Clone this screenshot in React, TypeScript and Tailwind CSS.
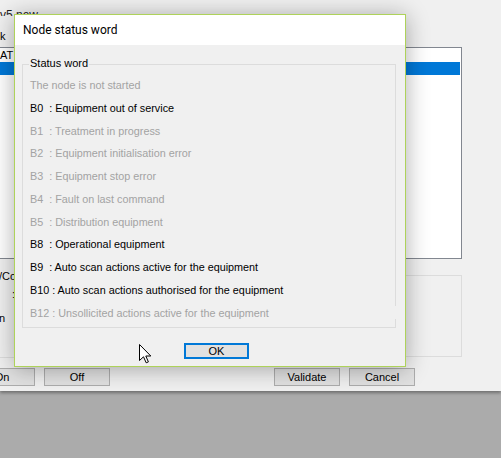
const rows = [
  { text: "The node is not started", on: false },
  { text: "B0  : Equipment out of service", on: true },
  { text: "B1  : Treatment in progress", on: false },
  { text: "B2  : Equipment initialisation error", on: false },
  { text: "B3  : Equipment stop error", on: false },
  { text: "B4  : Fault on last command", on: false },
  { text: "B5  : Distribution equipment", on: false },
  { text: "B8  : Operational equipment", on: true },
  { text: "B9  : Auto scan actions active for the equipment", on: true },
  { text: "B10 : Auto scan actions authorised for the equipment", on: true },
  { text: "B12 : Unsollicited actions active for the equipment", on: false },
];

const WinButton = ({ label, className }: { label: string; className?: string }) => (
  <div
    className={`h-[18px] w-[66px] shrink-0 border border-[#adadad] bg-[#e1e1e1] flex items-center justify-center text-[11px] text-black ${className ?? ""}`}
  >
    {label}
  </div>
);

const Cursor = () => (
  <svg width="13" height="20" viewBox="0 0 13 20" className="absolute left-[124px] top-[329px]">
    <path
      d="M0.5 0.5 L0.5 16.5 L4.5 12.8 L7.2 18.8 L9.4 17.9 L6.8 12 L11.8 12 Z"
      fill="#ffffff"
      stroke="#000000"
      strokeWidth="1"
      strokeLinejoin="miter"
    />
  </svg>
);

const App = () => {
  return (
    <div
      className="relative w-[501px] h-[458px] overflow-hidden bg-[#ababab]"
      style={{ fontFamily: '"Liberation Sans", Arial, sans-serif' }}
    >
      {/* window behind the dialog */}
      <div className="h-[391px] bg-[#f0f0f0] flex flex-col text-[11px] leading-[13px] text-black shadow-[0_2px_3px_rgba(0,0,0,0.35)]">
        <div className="h-[16px] overflow-hidden pt-[9px] text-[12px] text-[#1e1e1e]">v5.new</div>
        <div className="h-[31px] pt-[14px]">k</div>

        <div className="-ml-[2px] w-[464px] h-[212px] border border-[#828790] bg-white flex flex-col">
          <div className="h-[14px] leading-[14px] pl-[1px]">AT</div>
          <div className="h-[13px] mr-[1px] bg-[#0078d7]" />
        </div>

        <div className="h-[109px] flex">
          <div className="w-[275px] flex flex-col">
            <div className="mt-[11px] -ml-[1px]">/Co</div>
            <div className="mt-[5px] pl-[12px]">:</div>
            <div className="mt-[11px] -ml-[1px]">n</div>
            <div className="mt-[32px] h-[1px] w-[14px] bg-[#dcdcdc]" />
          </div>
          <div className="mt-[16px] w-[187px] h-[82px] border border-[#dcdcdc]" />
        </div>

        <div className="flex">
          <WinButton label="On" className="-ml-[31px]" />
          <WinButton label="Off" className="ml-[9px]" />
          <WinButton label="Validate" className="ml-[164px]" />
          <WinButton label="Cancel" className="ml-[9px]" />
        </div>
      </div>

      {/* Node status word dialog */}
      <div className="absolute left-[14px] top-[14px] w-[392px] h-[353px] border border-[#aed25a] bg-[#f0f0f0] shadow-[0_2px_22px_rgba(0,0,0,0.32)] flex flex-col">
        <div
          className="h-[30px] bg-white flex items-center pl-[8px] text-[12px] text-black"
          style={{ fontFamily: 'Roboto, "Noto Sans", sans-serif' }}
        >
          Node status word
        </div>

        <div className="flex flex-col pl-[7px] pt-[19px]">
          <div className="relative w-[374px] h-[264px] border border-[#dcdcdc]">
            <span className="absolute left-[6px] -top-[8px] px-[1px] bg-[#f0f0f0] text-[11px] leading-[13px] text-black">
              Status word
            </span>
            <div className="flex flex-col pl-[7px] pt-[9px]">
              {rows.map((r, i) => (
                <div
                  key={r.text}
                  className={`relative h-[22.75px] leading-[22.75px] text-[10.8px] whitespace-pre ${
                    r.on ? "text-black" : "text-[#a3a3a3]"
                  }`}
                >
                  {r.text}
                  {i === rows.length - 1 && (
                    <span className="absolute -right-[2px] top-[4px] h-[13px] w-[4px] bg-[#f0f0f0]" />
                  )}
                </div>
              ))}
            </div>
          </div>

          <div className="mt-[15px] ml-[162px] w-[65px] h-[16px] border-2 border-[#0078d7] bg-[#e1e1e1] flex items-center justify-center text-[11px] leading-[12px] text-black">
            OK
          </div>
        </div>

        <Cursor />
      </div>
    </div>
  );
};

export default App;
